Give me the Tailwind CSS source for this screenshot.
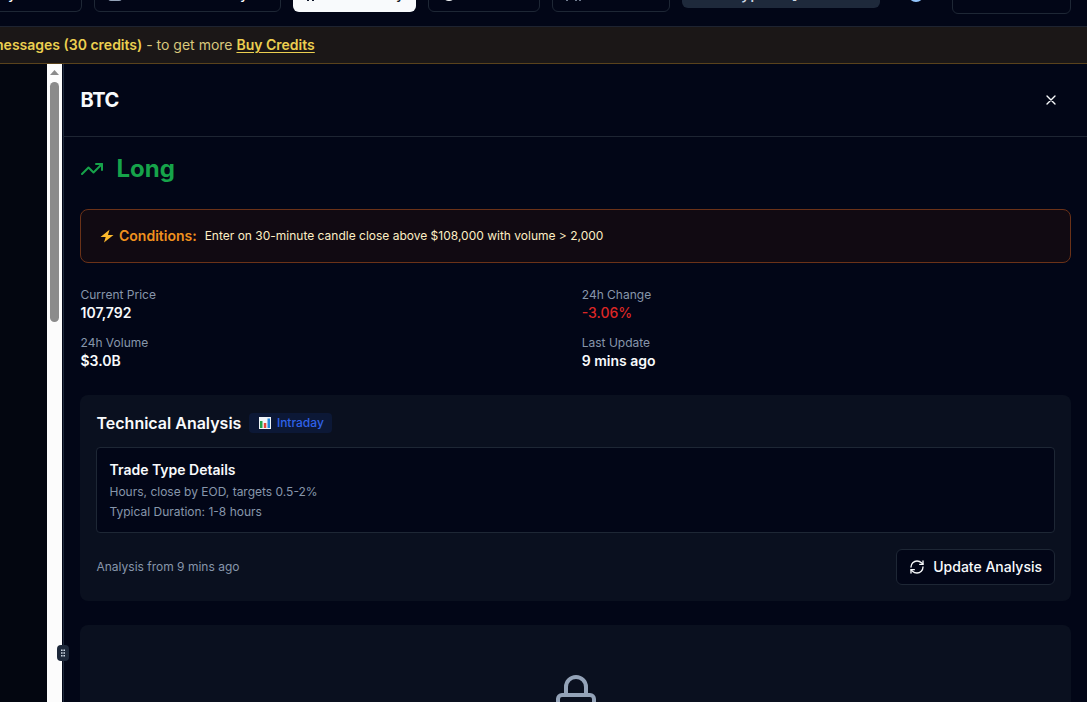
<!DOCTYPE html>
<html lang="en">
<head>
    <meta charset="UTF-8">
    <meta name="viewport" content="width=device-width, initial-scale=1.0">
    <title>BTC Analysis</title>
    <script src="https://cdn.jsdelivr.net/npm/@tailwindcss/browser@4"></script>
</head>
<body class="h-screen overflow-hidden flex flex-col bg-[#020617] text-[#f8fafc] font-['Inter',sans-serif] text-sm">
    <!-- Toolbar, scrolled partly out of view -->
    <header class="h-[27px] shrink-0 flex items-start border-b border-[#1e2330] overflow-hidden font-medium leading-5">
        <div class="-mt-6 flex items-start w-full">
            <button class="w-[82px] h-9 border border-l-0 border-[#1e2735] rounded-r-md pl-2 text-left">y</button>
            <button class="ml-3 w-[187px] h-9 border border-[#1e2735] rounded-md flex items-center px-3">
                <svg class="w-4 h-4" viewBox="0 0 16 16" fill="none" stroke="#94a3b8" stroke-width="2"><rect x="2" y="1" width="12" height="13" rx="2" /></svg>
                <span class="ml-auto mr-5">y</span>
            </button>
            <button class="ml-3 w-[123px] h-9 rounded-md bg-[#f8fafc] text-[#0f172a] flex items-center px-3">
                <svg class="w-4 h-4" viewBox="0 0 16 16" fill="none" stroke="currentColor" stroke-width="2"><path d="M3 15V8l4-5 4 5M8 15v-4" /></svg>
                <span class="ml-auto">y</span>
            </button>
            <button class="ml-3 w-28 h-9 border border-[#1e2735] rounded-md flex items-center px-3">
                <svg class="w-4 h-4" viewBox="0 0 16 16" fill="currentColor"><circle cx="8" cy="8" r="7" /></svg>
            </button>
            <button class="ml-3 w-[118px] h-9 border border-[#1e2735] rounded-md flex items-center px-3">
                <svg class="w-4 h-4" viewBox="0 0 16 16" fill="none" stroke="#94a3b8" stroke-width="1.5"><path d="M2 15V9M11 15V5M15 15V8" /></svg>
            </button>
            <div class="ml-3 w-[198px] h-8 rounded-md bg-[#1e293b] text-[#cbd5e1] flex items-center pl-[22px] pt-0.5 text-base">
                <svg class="w-4 h-4" viewBox="0 0 16 16" fill="none" stroke="currentColor" stroke-width="2"><circle cx="7" cy="7" r="6" /></svg>
                <span class="ml-[21px]">yp</span>
                <span class="ml-8">]</span>
            </div>
            <svg class="ml-7 mt-2.5 w-4 h-4" viewBox="0 0 16 16" fill="none" stroke="#93c5fd" stroke-width="2"><circle cx="8" cy="8" r="7" /></svg>
            <div class="ml-7 w-[119px] h-[38px] border border-[#1e2735] rounded-md"></div>
        </div>
    </header>

    <!-- Credits banner -->
    <div class="h-[37px] shrink-0 flex items-center bg-[#1b1717] border-b border-[#59421c] whitespace-nowrap text-[#d9c87c]">
        <p class="-ml-[9px]"><span class="font-semibold text-[#eccf50]">messages (30 credits)</span> - to get more <a href="#" class="font-semibold text-[#eccf50] underline underline-offset-2">Buy Credits</a></p>
    </div>

    <div class="flex-1 min-h-0 flex">
        <aside class="w-[47px] shrink-0 bg-[#030610]"></aside>

        <!-- Scrollbar -->
        <div class="w-[15px] shrink-0 bg-[#fcfcfc] flex flex-col items-center">
            <svg class="mt-[6px] w-[9px] h-[5px] shrink-0" viewBox="0 0 9 5" fill="#8b8b8b"><path d="M4.5 0 9 5H0z" /></svg>
            <div class="mt-[7px] w-[9px] h-60 rounded-full bg-[#8b8b8b]"></div>
        </div>

        <!-- Resize handle -->
        <div class="relative w-0.5 shrink-0 border-r border-[#1e293b]">
            <div class="absolute z-10 top-[581px] -left-[5px] w-3 h-4 rounded-sm bg-[#1e293b] flex items-center justify-center">
                <svg class="w-[4px] h-[8px]" viewBox="0 0 5 9" fill="#cbd5e1"><path d="M0 0h2v2H0zM3 0h2v2H3zM0 3.5h2v2H0zM3 3.5h2v2H3zM0 7h2v2H0zM3 7h2v2H3z" /></svg>
            </div>
        </div>

        <main class="flex-1 min-w-0 flex flex-col overflow-hidden">
            <div class="h-[73px] shrink-0 px-4 flex items-center justify-between border-b border-[#1e2533]">
                <h2 class="pl-[0.5px] text-xl font-bold tracking-[-0.4px]">BTC</h2>
                <button class="w-10 h-10 flex items-center justify-center">
                    <svg class="w-4 h-4" viewBox="0 0 24 24" fill="none" stroke="currentColor" stroke-width="2" stroke-linecap="round" stroke-linejoin="round"><path d="M18 6 6 18M6 6l12 12" /></svg>
                </button>
            </div>

            <div class="px-4 pt-4 shrink-0">
                <div class="flex items-center gap-3 text-[#16a34a] h-8">
                    <svg class="w-6 h-6" viewBox="0 0 24 24" fill="none" stroke="currentColor" stroke-width="2" stroke-linecap="round" stroke-linejoin="round"><path d="m22 7-8.500 8.500-5-5L2 17" /><path d="M16 7h6v6" /></svg>
                    <span class="pl-[0.5px] text-2xl font-bold">Long</span>
                </div>

                <div class="mt-6 h-[54px] px-[19px] flex items-center rounded-lg border border-[#6b3218] bg-[#110a12]">
                    <svg class="w-[14px] h-[14px]" viewBox="0 0 14 14" fill="#fdb92c"><path d="M9.500.8 0.500 8h5.200L4 13.500 13.500 6H8z" /></svg>
                    <span class="ml-[5px] font-semibold text-[#f0911e]">Conditions:</span>
                    <span class="ml-2 text-xs text-[#fdeec4]">Enter on 30-minute candle close above $108,000 with volume &gt; 2,000</span>
                </div>

                <div class="mt-6 pl-[0.5px] grid grid-cols-2 gap-x-3 gap-y-3">
                    <div>
                        <p class="text-xs leading-4 text-[#8796ab]">Current Price</p>
                        <p class="font-semibold leading-5">107,792</p>
                    </div>
                    <div>
                        <p class="text-xs leading-4 text-[#8796ab]">24h Change</p>
                        <p class="font-medium leading-5 text-[#dc2626]">-3.06%</p>
                    </div>
                    <div>
                        <p class="text-xs leading-4 text-[#8796ab]">24h Volume</p>
                        <p class="font-semibold leading-5">$3.0B</p>
                    </div>
                    <div>
                        <p class="text-xs leading-4 text-[#8796ab]">Last Update</p>
                        <p class="font-semibold leading-5">9 mins ago</p>
                    </div>
                </div>

                <section class="mt-6 p-4 h-[206px] rounded-lg bg-[#0a101f]">
                    <div class="h-6 flex items-center gap-2">
                        <h3 class="pl-[0.5px] text-base font-semibold">Technical Analysis</h3>
                        <span class="h-5 pl-[9.5px] pr-2 rounded bg-[#0c1836] text-[#2f62e8] text-xs font-medium flex items-center">
                            <svg class="mr-[6px] w-3 h-3" viewBox="0 0 12 12"><path fill="#f1f5f9" d="M0 0h12v12H0z" /><path fill="#22a447" d="M1 4h2.500v7H1z" /><path fill="#e5483b" d="M4.800 6h2.500v5H4.800z" /><path fill="#2586d9" d="M8.500 1.500H11V11H8.500z" /></svg>
                            Intraday
                        </span>
                    </div>
                    <div class="mt-3 h-[86px] pl-[12.5px] pr-3 py-3 border border-[#1e2735] rounded bg-[#020617]">
                        <h4 class="font-semibold leading-5">Trade Type Details</h4>
                        <p class="mt-1 text-xs leading-4 text-[#8796ab]">Hours, close by EOD, targets 0.5-2%</p>
                        <p class="mt-1 text-xs leading-4 text-[#8796ab]">Typical Duration: 1-8 hours</p>
                    </div>
                    <div class="mt-4 flex items-center justify-between">
                        <p class="pl-[0.5px] text-xs text-[#8796ab]">Analysis from 9 mins ago</p>
                        <button class="h-9 px-3 flex items-center gap-2 border border-[#1e2735] rounded-md bg-[#020617] font-medium">
                            <svg class="w-4 h-4" viewBox="0 0 24 24" fill="none" stroke="currentColor" stroke-width="2" stroke-linecap="round" stroke-linejoin="round"><path d="M3 12a9 9 0 0 1 9-9 9.750 9.750 0 0 1 6.740 2.740L21 8" /><path d="M21 3v5h-5" /><path d="M21 12a9 9 0 0 1-9 9 9.750 9.750 0 0 1-6.740-2.740L3 16" /><path d="M8 16H3v5" /></svg>
                            Update Analysis
                        </button>
                    </div>
                </section>

                <section class="mt-6 h-40 pt-12 rounded-lg bg-[#0a101f] flex justify-center">
                    <svg class="w-12 h-12" viewBox="0 0 24 24" fill="none" stroke="#94a3b8" stroke-width="2" stroke-linecap="round" stroke-linejoin="round"><rect width="18" height="11" x="3" y="11" rx="2" ry="2" /><path d="M7 11V7a5 5 0 0 1 10 0v4" /></svg>
                </section>
            </div>
        </main>
    </div>
</body>
</html>
